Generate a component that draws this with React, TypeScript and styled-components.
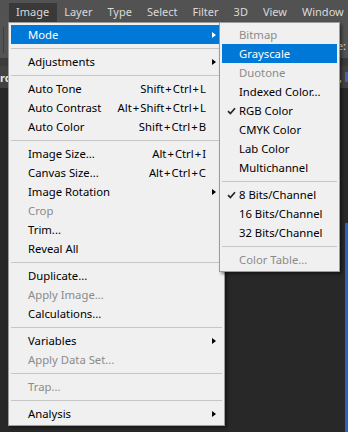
import React from "react";
import styled, { createGlobalStyle } from "styled-components";

type Entry =
	| { sep: true }
	| {
			sep?: false;
			label: string;
			shortcut?: string;
			submenu?: boolean;
			disabled?: boolean;
			active?: boolean;
			checked?: boolean;
	  };

const topMenus = ["Image", "Layer", "Type", "Select", "Filter", "3D", "View", "Window"];

const imageMenu: Entry[] = [
	{ label: "Mode", submenu: true, active: true },
	{ sep: true },
	{ label: "Adjustments", submenu: true },
	{ sep: true },
	{ label: "Auto Tone", shortcut: "Shift+Ctrl+L" },
	{ label: "Auto Contrast", shortcut: "Alt+Shift+Ctrl+L" },
	{ label: "Auto Color", shortcut: "Shift+Ctrl+B" },
	{ sep: true },
	{ label: "Image Size...", shortcut: "Alt+Ctrl+I" },
	{ label: "Canvas Size...", shortcut: "Alt+Ctrl+C" },
	{ label: "Image Rotation", submenu: true },
	{ label: "Crop", disabled: true },
	{ label: "Trim..." },
	{ label: "Reveal All" },
	{ sep: true },
	{ label: "Duplicate..." },
	{ label: "Apply Image...", disabled: true },
	{ label: "Calculations..." },
	{ sep: true },
	{ label: "Variables", submenu: true },
	{ label: "Apply Data Set...", disabled: true },
	{ sep: true },
	{ label: "Trap...", disabled: true },
	{ sep: true },
	{ label: "Analysis", submenu: true },
];

const modeMenu: Entry[] = [
	{ label: "Bitmap", disabled: true },
	{ label: "Grayscale", active: true },
	{ label: "Duotone", disabled: true },
	{ label: "Indexed Color..." },
	{ label: "RGB Color", checked: true },
	{ label: "CMYK Color" },
	{ label: "Lab Color" },
	{ label: "Multichannel" },
	{ sep: true },
	{ label: "8 Bits/Channel", checked: true },
	{ label: "16 Bits/Channel" },
	{ label: "32 Bits/Channel" },
	{ sep: true },
	{ label: "Color Table...", disabled: true },
];

const Shortcut: React.FC<{ keys: string }> = ({ keys }) => {
	const parts = keys.split("+");
	return (
		<Keys>
			{parts.map((p, i) => (
				<React.Fragment key={i}>
					{i > 0 && <Plus>+</Plus>}
					{p}
				</React.Fragment>
			))}
		</Keys>
	);
};

const CheckMark = () => (
	<svg width="9" height="8" viewBox="0 0 9 8">
		<path d="M1 4.2 L3.4 6.6 L8 1.2" fill="none" stroke="#262626" strokeWidth="1.7" />
	</svg>
);

const MenuList: React.FC<{ items: Entry[] }> = ({ items }) => (
	<>
		{items.map((it, i) =>
			it.sep ? (
				<Separator key={i} />
			) : (
				<Row key={i} $active={!!it.active} $disabled={!!it.disabled}>
					<CheckCell>{it.checked && <CheckMark />}</CheckCell>
					<span>{it.label}</span>
					{it.shortcut ? <Shortcut keys={it.shortcut} /> : <span />}
					<ArrowCell>{it.submenu && <Arrow $active={!!it.active} />}</ArrowCell>
				</Row>
			)
		)}
	</>
);

const App: React.FC = () => {
	return (
		<Screen>
			<GlobalStyle />
			<MenuBar>
				{topMenus.map((m, i) => (
					<TopItem key={m} $open={i === 0}>
						{m}
					</TopItem>
				))}
			</MenuBar>
			<OptionsBar>
				<Grip />
				<BarText>e:</BarText>
			</OptionsBar>
			<Divider />
			<TabBar>
				<TabText>rd</TabText>
				<TabEnd>
					<TabText>,</TabText>
					<TabChip />
				</TabEnd>
			</TabBar>
			<Workspace>
				<Canvas />
			</Workspace>

			<Menu $left={8} $width={217}>
				<MenuList items={imageMenu} />
			</Menu>
			<Menu $left={219} $width={121}>
				<MenuList items={modeMenu} />
			</Menu>
		</Screen>
	);
};

export default App;

const GlobalStyle = createGlobalStyle`
	body {
		margin: 0;
		background: #282828;
		font-family: "Noto Sans", "Open Sans", sans-serif;
	}
`;

const Screen = styled.div`
	position: relative;
	width: 348px;
	height: 432px;
	overflow: hidden;
	display: flex;
	flex-direction: column;
	background: #282828;
`;

const MenuBar = styled.div`
	display: flex;
	height: 22px;
	padding-left: 8.5px;
	background: #525252;
	box-sizing: border-box;
`;

const TopItem = styled.div<{ $open: boolean }>`
	margin-top: 3px;
	height: 19px;
	line-height: 18px;
	padding: 0 7.5px;
	font-size: 11px;
	color: #dadada;
	background: ${(p) => (p.$open ? "#393939" : "transparent")};
	white-space: nowrap;
`;

const OptionsBar = styled.div`
	display: flex;
	justify-content: space-between;
	align-items: center;
	height: 36px;
	padding: 0 0 0 3px;
	background: #535353;
	box-sizing: border-box;
`;

const Grip = styled.div`
	width: 1px;
	height: 26px;
	background: #3c3c3c;
`;

const BarText = styled.span`
	font-size: 11px;
	color: #e2e2e2;
	padding-top: 10px;
	margin-right: 2px;
`;

const Divider = styled.div`
	height: 8px;
	background: #3b3b3b;
`;

const TabBar = styled.div`
	display: flex;
	justify-content: space-between;
	align-items: center;
	height: 22px;
	background: #424242;
`;

const TabText = styled.span`
	font-size: 11px;
	font-weight: 700;
	color: #e6e6e6;
`;

const TabEnd = styled.div`
	display: flex;
	align-items: center;
	gap: 3px;
`;

const TabChip = styled.div`
	width: 3px;
	height: 10px;
	background: #4a5fb0;
`;

const Workspace = styled.div`
	flex: 1;
	display: flex;
	justify-content: flex-end;
	padding-top: 135px;
	background: #282828;
`;

const Canvas = styled.div`
	width: 3px;
	background: #2c62bd;
`;

const Menu = styled.div<{ $left: number; $width: number }>`
	position: absolute;
	top: 22px;
	left: ${(p) => p.$left}px;
	width: ${(p) => p.$width}px;
	box-sizing: border-box;
	padding: 2px;
	background: #f0f0f0;
	border: 1px solid #9c9c9c;
	box-shadow: 2px 2px 3px rgba(0, 0, 0, 0.45);
	font-family: "Noto Sans", "Open Sans", sans-serif;
	font-size: 11.3px;
`;

const Row = styled.div<{ $active: boolean; $disabled: boolean }>`
	display: grid;
	grid-template-columns: 17px 1fr auto 16px;
	align-items: center;
	height: 19px;
	line-height: 19px;
	white-space: nowrap;
	background: ${(p) => (p.$active ? "#0078d7" : "transparent")};
	color: ${(p) => (p.$active ? "#ffffff" : p.$disabled ? "#8b8b8b" : "#000000")};
`;

const CheckCell = styled.span`
	display: flex;
	align-items: center;
	padding-left: 5px;
`;

const Keys = styled.span`
	display: flex;
`;

const Plus = styled.span`
	margin: 0 1px;
`;

const ArrowCell = styled.span`
	display: flex;
	align-items: center;
	padding-left: 6px;
`;

const Arrow = styled.span<{ $active: boolean }>`
	width: 0;
	height: 0;
	border-top: 3.5px solid transparent;
	border-bottom: 3.5px solid transparent;
	border-left: 4px solid ${(p) => (p.$active ? "#ffffff" : "#000000")};
`;

const Separator = styled.div`
	height: 1px;
	margin: 4px 0 3px;
	background: #c6c6c6;
`;
